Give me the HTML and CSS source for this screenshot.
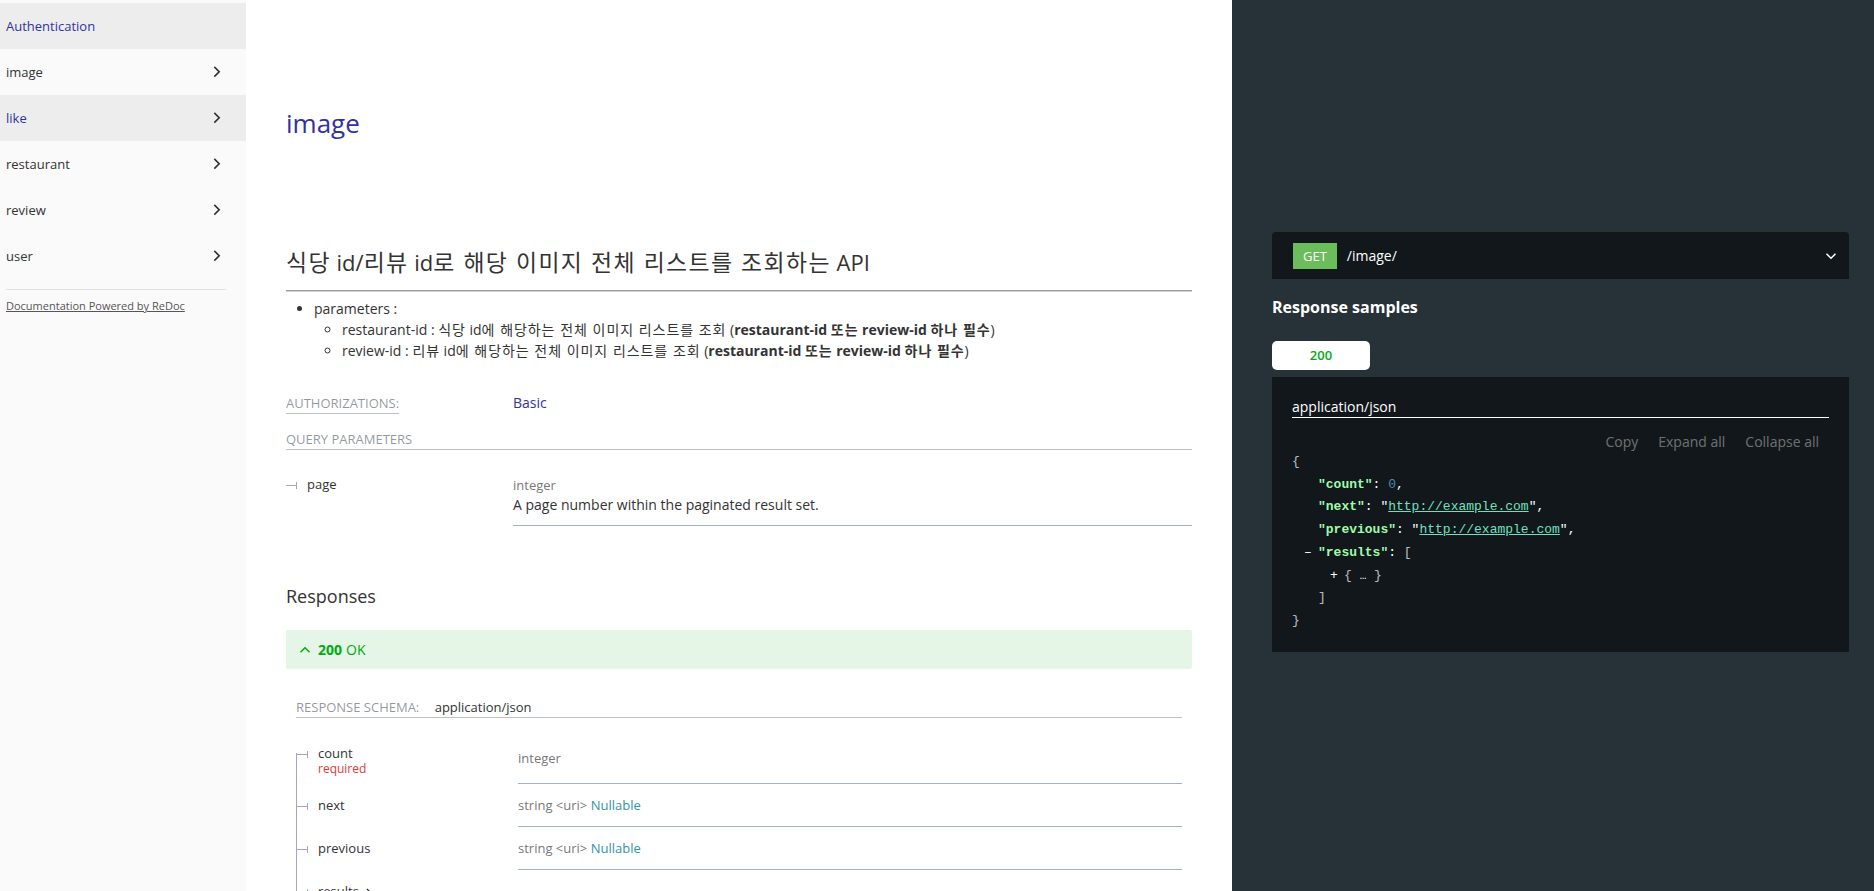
FILE: index.html
```html
<!DOCTYPE html>
<html lang="ko">
<head>
<meta charset="utf-8">
<title>image - ReDoc</title>
<link rel="stylesheet" href="styles.css">
</head>
<body>
<div class="page">
  <nav class="sidebar">
    <ul class="menu">
      <li class="menu-item active"><span>Authentication</span></li>
      <li class="menu-item"><span>image</span><svg class="menu-chev" viewBox="0 0 24 24"><polygon points="17.3 8.3 12 13.6 6.7 8.3 5.3 9.7 12 16.4 18.7 9.7"/></svg></li>
      <li class="menu-item active"><span>like</span><svg class="menu-chev" viewBox="0 0 24 24"><polygon points="17.3 8.3 12 13.6 6.7 8.3 5.3 9.7 12 16.4 18.7 9.7"/></svg></li>
      <li class="menu-item"><span>restaurant</span><svg class="menu-chev" viewBox="0 0 24 24"><polygon points="17.3 8.3 12 13.6 6.7 8.3 5.3 9.7 12 16.4 18.7 9.7"/></svg></li>
      <li class="menu-item"><span>review</span><svg class="menu-chev" viewBox="0 0 24 24"><polygon points="17.3 8.3 12 13.6 6.7 8.3 5.3 9.7 12 16.4 18.7 9.7"/></svg></li>
      <li class="menu-item"><span>user</span><svg class="menu-chev" viewBox="0 0 24 24"><polygon points="17.3 8.3 12 13.6 6.7 8.3 5.3 9.7 12 16.4 18.7 9.7"/></svg></li>
    </ul>
    <div class="powered"><a href="#">Documentation Powered by ReDoc</a></div>
  </nav>

  <main class="content">
    <section class="middle">
      <h1 class="tag-title">image</h1>
      <h2 class="op-title"><span class="ko">식당</span> id/<span class="ko">리뷰</span> id<span class="ko">로 해당 이미지 전체 리스트를 조회하는</span> API</h2>
      <hr class="rule">
      <ul class="desc">
        <li>parameters :
          <ul>
            <li>restaurant-id : <span class="ko">식당</span> id<span class="ko">에 해당하는 전체 이미지 리스트를 조회</span> (<strong>restaurant-id <span class="ko">또는</span> review-id <span class="ko">하나 필수</span></strong>)</li>
            <li>review-id : <span class="ko">리뷰</span> id<span class="ko">에 해당하는 전체 이미지 리스트를 조회</span> (<strong>restaurant-id <span class="ko">또는</span> review-id <span class="ko">하나 필수</span></strong>)</li>
          </ul>
        </li>
      </ul>

      <div class="auth">
        <div class="auth-col"><h5 class="sec-h auth-h">Authorizations:</h5></div>
        <div class="auth-val">Basic</div>
      </div>

      <h5 class="sec-h query-h">Query Parameters</h5>
      <table class="params query">
        <tr>
          <td class="pname"><span class="bullet"></span><span>page</span></td>
          <td class="pdetail">
            <div class="ptype">integer</div>
            <div class="pdesc">A page number within the paginated result set.</div>
          </td>
        </tr>
      </table>

      <h3 class="resp-h">Responses</h3>
      <div class="resp-title">
        <svg class="resp-chev" viewBox="0 0 24 24"><polygon points="17.3 8.3 12 13.6 6.7 8.3 5.3 9.7 12 16.4 18.7 9.7"/></svg>
        <strong class="resp-code">200</strong><span>OK</span>
      </div>
      <div class="resp-details">
        <h5 class="sec-h schema-h">Response Schema: <span class="mt">application/json</span></h5>
        <table class="params schema">
          <tr class="first">
            <td class="pname"><span class="bullet"></span><span>count</span><span class="req">required</span></td>
            <td class="pdetail"><div class="ptype">integer</div></td>
          </tr>
          <tr>
            <td class="pname"><span class="bullet"></span><span>next</span></td>
            <td class="pdetail"><div class="ptype">string &lt;uri&gt; <span class="nullable">Nullable</span></div></td>
          </tr>
          <tr>
            <td class="pname"><span class="bullet"></span><span>previous</span></td>
            <td class="pdetail"><div class="ptype">string &lt;uri&gt; <span class="nullable">Nullable</span></div></td>
          </tr>
          <tr class="last">
            <td class="pname"><span class="bullet"></span><span>results</span><svg class="prop-chev" viewBox="0 0 24 24"><polygon points="17.3 8.3 12 13.6 6.7 8.3 5.3 9.7 12 16.4 18.7 9.7"/></svg></td>
            <td class="pdetail"></td>
          </tr>
        </table>
      </div>
    </section>

    <aside class="right">
      <div class="endpoint">
        <span class="verb">get</span>
        <span class="path">/image/</span>
        <svg class="endpoint-chev" viewBox="0 0 24 24"><polygon points="17.3 8.3 12 13.6 6.7 8.3 5.3 9.7 12 16.4 18.7 9.7"/></svg>
      </div>
      <h3 class="samples-h">Response samples</h3>
      <div class="tabs"><div class="tab">200</div></div>
      <div class="panel">
        <div class="mime">application/json</div>
        <div class="controls"><span>Copy</span><span>Expand all</span><span>Collapse all</span></div>
        <div class="json">
          <div><span class="p">{</span></div>
          <div class="jind">
            <div><span class="k">"count"</span>: <span class="n">0</span>,</div>
            <div><span class="k">"next"</span>: "<a class="u" href="#">http://example.com</a>",</div>
            <div><span class="k">"previous"</span>: "<a class="u" href="#">http://example.com</a>",</div>
            <div><span class="col">–</span><span class="k">"results"</span>: <span class="p">[</span></div>
            <div class="jind"><div><span class="col">+</span><span class="p">{</span> <span class="ell">…</span> <span class="p">}</span></div></div>
            <div><span class="p">]</span></div>
          </div>
          <div><span class="p">}</span></div>
        </div>
      </div>
    </aside>
  </main>
</div>
</body>
</html>
```

FILE: styles.css
```css
* { box-sizing: border-box; }
html, body { margin: 0; padding: 0; }
body {
  width: 1874px;
  height: 891px;
  overflow: hidden;
  font-family: "Open Sans", "Noto Sans CJK KR", sans-serif;
  font-size: 14px;
  color: #333;
  background: #fff;
}
.page { display: flex; height: 891px; }
.ko { font-family: "Noto Sans CJK KR", sans-serif; line-height: 1; }
.op-title .ko { font-size: 1.04em; letter-spacing: 0.06em; }
.desc .ko { letter-spacing: 0.065em; }

/* Sidebar */
.sidebar { width: 246px; flex: none; background: #fafafa; padding-top: 3px; }
.menu { list-style: none; margin: 0; padding: 0; }
.menu-item {
  display: flex;
  align-items: center;
  justify-content: space-between;
  height: 46px;
  padding: 0 20px 0 6px;
  font-size: 13px;
  color: #333;
}
.menu-item.active { background: #ededed; color: #32329f; }
.menu-chev { width: 19.5px; height: 19.5px; transform: rotate(-90deg); fill: #333; }
.powered {
  margin: 10px 20px 0 6px;
  border-top: 1px solid #e1e1e1;
  padding-top: 8px;
  font-size: 11px;
  line-height: 16px;
}
.powered a { color: #555; text-decoration: underline; }

/* Middle */
.content { display: flex; flex: 1; min-width: 0; }
.middle { width: 986px; flex: none; padding: 0 40px; }
.tag-title { margin: 107px 0 0; font-size: 26px; line-height: 32px; font-weight: 400; color: #32329f; }
.op-title { margin: 108px 0 0; height: 30px; font-size: 22px; line-height: 30px; font-weight: 400; color: #333; white-space: nowrap; }
.rule { margin: 13px 0 0; height: 0; border: 0; border-top: 1px solid #9a9a9a; border-bottom: 1px solid #d4d4d4; }
.desc { margin: 7px 0 0; padding-left: 28px; line-height: 20px; }
.desc ul { margin: 0; padding-left: 28px; list-style-type: circle; }
.desc li { min-height: 20px; }
.desc ul li { margin-top: 1px; }
.desc strong { font-weight: 700; }

.sec-h {
  margin: 0;
  font-size: 13px;
  line-height: 20px;
  font-weight: 400;
  text-transform: uppercase;
  color: rgba(38, 50, 56, 0.5);
  border-bottom: 1px solid rgba(38, 50, 56, 0.3);
}
.auth { display: flex; margin-top: 32px; }
.auth-col { width: 227px; flex: none; }
.auth-h { display: inline-block; }
.auth-val { color: #32329f; line-height: 20px; }
.query-h { margin-top: 15px; }

.params { width: 100%; border-collapse: separate; border-spacing: 0; }
.query { margin-top: 15px; }
.pname {
  position: relative;
  width: 227px;
  padding: 10px 10px 10px 0;
  vertical-align: top;
  line-height: 22px;
  font-size: 13px;
  white-space: nowrap;
  color: #333;
}
.query .pname { line-height: 18px; }
.schema .pname { width: 222px; border-left: 1px solid #a3a3cc; }
.schema tr.first .pname { border-left-color: transparent; }
.schema tr.first .pname::before {
  content: "";
  position: absolute;
  left: -1px;
  top: 21px;
  bottom: 0;
  width: 1px;
  background: #a3a3cc;
}
.bullet { display: inline-block; vertical-align: middle; margin-right: 10px; line-height: 0; }
.bullet::before { content: ""; display: inline-block; vertical-align: middle; width: 10px; height: 1px; background: #a3a3cc; }
.bullet::after { content: ""; display: inline-block; vertical-align: middle; width: 1px; height: 7px; background: #a3a3cc; }
.req { display: block; margin-left: 21px; color: #e53935; font-size: 12px; line-height: 10px; }
.prop-chev { width: 16px; height: 16px; transform: rotate(-90deg); fill: #333; vertical-align: middle; margin-left: 2px; }
.pdetail { padding: 10px 0; border-bottom: 1px solid #9fb4be; vertical-align: middle; }
.schema tr.last .pdetail { border-bottom: 0; height: 60px; }
.ptype { font-size: 13px; line-height: 20px; color: rgba(102, 102, 102, 0.9); }
.schema .ptype { line-height: 22px; }
.nullable { color: #3195a6; }
.pdesc { line-height: 20px; color: #333; }

.resp-h { margin: 58px 0 0; font-size: 18px; line-height: 24px; font-weight: 400; color: #333; }
.resp-title {
  margin-top: 22px;
  display: flex;
  align-items: center;
  padding: 9px 10px;
  background: rgba(0, 170, 19, 0.1);
  color: #00aa13;
  border-radius: 2px;
  line-height: 21px;
}
.resp-chev { width: 18px; height: 18px; fill: #00aa13; transform: rotate(180deg); margin-right: 4px; }
.resp-code { font-weight: 700; margin-right: 4px; }
.resp-details { padding: 0 10px; }
.schema-h { margin-top: 28px; }
.schema-h .mt { text-transform: none; color: #333; margin-left: 12px; }
.schema { margin-top: 14px; }

/* Right panel */
.right { flex: 1; min-width: 0; background: #263238; padding: 232px 25px 0 40px; color: #fff; }
.endpoint {
  display: flex;
  align-items: center;
  height: 47px;
  padding: 0 9px 0 21px;
  background: #11171a;
  border-radius: 4px 4px 0 0;
}
.verb { background: #6bbd5b; color: #fff; font-size: 13px; line-height: 20px; padding: 3px 10px; text-transform: uppercase; }
.path { margin-left: 10px; font-size: 14px; color: #fff; }
.endpoint-chev { margin-left: auto; width: 18px; height: 18px; fill: #fff; }
.samples-h { margin: 17px 0 0; font-size: 16px; line-height: 22px; font-weight: 700; color: #fff; }
.tabs { margin-top: 23px; display: flex; }
.tab {
  width: 98px;
  padding: 5px 10px;
  background: #fff;
  color: #00aa13;
  border-radius: 5px;
  text-align: center;
  font-size: 13px;
  line-height: 19px;
  font-weight: 600;
}
.panel { margin-top: 7px; background: #11171a; padding: 20px; height: 275px; }
.mime { line-height: 20px; border-bottom: 1px solid #fff; font-size: 14px; color: #fff; }
.controls { margin-top: 15px; display: flex; justify-content: flex-end; color: rgba(255, 255, 255, 0.4); }
.controls span { padding: 0 10px; line-height: 18px; font-size: 14px; }
.json { font-family: "Liberation Mono", monospace; font-size: 13px; line-height: 22.7px; color: #fff; }
.jind { padding-left: 26px; }
.k { color: #a0fbaa; font-weight: 700; }
.n { color: #4a8bb3; }
.p { opacity: 0.7; }
.u { color: #6fe0bf; text-decoration: underline; }
.col { display: inline-block; width: 14px; margin-left: -14px; }
.ell { font-size: 11px; }
```
